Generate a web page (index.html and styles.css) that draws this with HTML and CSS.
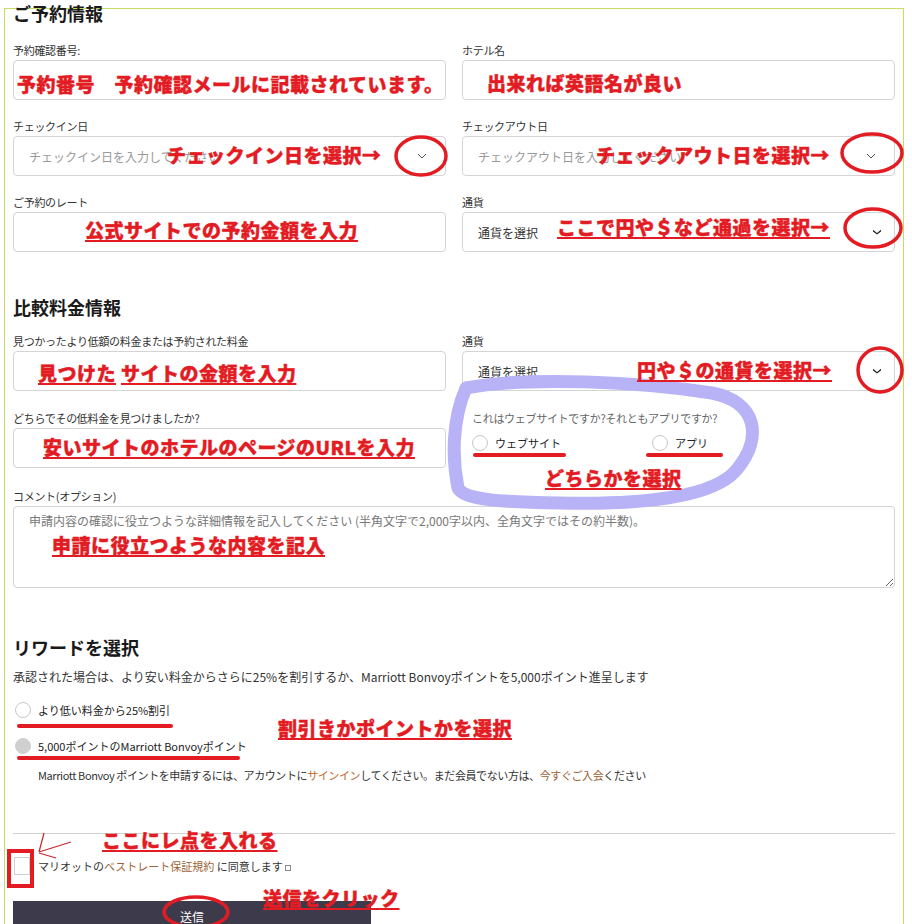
FILE: index.html
```html
<!DOCTYPE html>
<html lang="ja">
<head>
    <meta charset="UTF-8">
    <title>ベストレート保証 申請フォーム</title>
    <link rel="stylesheet" href="styles.css">
</head>
<body>

    <div class="frame">
        <h2 class="section-title first">ご予約情報</h2>
        <div class="grid grid-top">
            <div class="field">
                <label>予約確認番号:</label>
                <div class="box"></div>
            </div>
            <div class="field">
                <label>ホテル名</label>
                <div class="box"></div>
            </div>
            <div class="field">
                <label>チェックイン日</label>
                <div class="box select">
                    <span class="placeholder">チェックイン日を入力してください</span>
                    <svg class="chevron-thin" width="10" height="6" viewBox="0 0 10 6"><polyline points="1,1 5,5 9,1" fill="none" stroke="#555" stroke-width="1"/></svg>
                </div>
            </div>
            <div class="field">
                <label>チェックアウト日</label>
                <div class="box select">
                    <span class="placeholder">チェックアウト日を入力してください</span>
                    <svg class="chevron-thin" width="10" height="6" viewBox="0 0 10 6"><polyline points="1,1 5,5 9,1" fill="none" stroke="#555" stroke-width="1"/></svg>
                </div>
            </div>
            <div class="field">
                <label>ご予約のレート</label>
                <div class="box"></div>
            </div>
            <div class="field">
                <label>通貨</label>
                <div class="box select currency">
                    <span>通貨を選択</span>
                    <svg class="chevron-bold" width="8" height="6" viewBox="0 0 8 6"><path d="M0 0.8 L4 4 L8 0.8 L8 2.4 L4 5.6 L0 2.4 Z" fill="#222"/></svg>
                </div>
            </div>
        </div>

        <h2 class="section-title second">比較料金情報</h2>
        <div class="grid grid-compare">
            <div class="field">
                <label>見つかったより低額の料金または予約された料金</label>
                <div class="box"></div>
            </div>
            <div class="field">
                <label>通貨</label>
                <div class="box select currency">
                    <span>通貨を選択</span>
                    <svg class="chevron-bold" width="8" height="6" viewBox="0 0 8 6"><path d="M0 0.8 L4 4 L8 0.8 L8 2.4 L4 5.6 L0 2.4 Z" fill="#222"/></svg>
                </div>
            </div>
            <div class="field">
                <label>どちらでその低料金を見つけましたか?</label>
                <div class="box"></div>
            </div>
            <div class="source">
                <div class="source-question">これはウェブサイトですか?それともアプリですか?</div>
                <div class="source-options">
                    <div class="option option-wide"><span class="circle"></span>ウェブサイト</div>
                    <div class="option"><span class="circle"></span>アプリ</div>
                </div>
            </div>
        </div>

        <div class="field comment">
            <label>コメント(オプション)</label>
            <textarea placeholder="申請内容の確認に役立つような詳細情報を記入してください (半角文字で2,000字以内、全角文字ではその約半数)。"></textarea>
        </div>

        <h2 class="section-title reward">リワードを選択</h2>
        <p class="reward-text">承認された場合は、より安い料金からさらに25%を割引するか、Marriott Bonvoyポイントを5,000ポイント進呈します</p>
        <div class="option reward-option"><span class="circle"></span>より低い料金から25%割引</div>
        <div class="option reward-option second-option"><span class="circle filled"></span>5,000ポイントのMarriott Bonvoyポイント</div>
        <p class="reward-note">Marriott Bonvoy ポイントを申請するには、アカウントに<a class="link-orange" href="#">サインイン</a>してください。まだ会員でない方は、<a class="link-brown" href="#">今すぐご入会</a>ください</p>

        <div class="divider"></div>

        <div class="agree">
            <span class="checkbox"></span>
            <span>マリオットの<a class="link-brown" href="#">ベストレート保証規約</a> に同意します</span>
            <span class="ext-icon"></span>
        </div>

        <div class="submit">送信</div>
    </div>

    <!-- 赤字の書き込み -->
    <div class="marks">
        <svg class="marks-svg" width="912" height="924" viewBox="0 0 912 924">
            <path class="blob" d="M466 388 C530 376 640 382 712 393 C758 402 762 438 738 468 C716 498 640 505 560 503 C500 502 464 500 458 488 C452 458 452 420 466 388 Z"/>
            <ellipse class="ring" cx="421" cy="156" rx="25" ry="19"/>
            <ellipse class="ring" cx="872" cy="153" rx="30" ry="19"/>
            <ellipse class="ring" cx="873" cy="228" rx="28" ry="19"/>
            <ellipse class="ring" cx="880" cy="370" rx="22" ry="22"/>
            <ellipse class="ring" cx="196" cy="912" rx="32" ry="15"/>
            <line class="stroke" x1="475" y1="455" x2="564" y2="455"/>
            <line class="stroke" x1="648" y1="455" x2="721" y2="455"/>
            <line class="stroke" x1="19" y1="726" x2="171" y2="726"/>
            <line class="stroke" x1="19" y1="758" x2="238" y2="758"/>
            <rect class="box-mark" x="9" y="851" width="23" height="35"/>
            <line class="thin" x1="39" y1="852" x2="44" y2="833"/>
            <line class="thin" x1="39" y1="852" x2="71" y2="842"/>
            <line class="thin" x1="39" y1="853" x2="56" y2="858"/>
        </svg>
        <span class="note n-number">予約番号　予約確認メールに記載されています。</span>
        <span class="note n-hotel">出来れば英語名が良い</span>
        <span class="note n-checkin">チェックイン日を選択→</span>
        <span class="note n-checkout">チェックアウト日を選択→</span>
        <span class="note u n-currency">ここで円や＄など通過を選択→</span>
        <span class="note u n-rate">公式サイトでの予約金額を入力</span>
        <span class="note n-found"><span class="u">見つけた</span> <span class="u">サイトの金額を入力</span></span>
        <span class="note u n-url">安いサイトのホテルのページのURLを入力</span>
        <span class="note u n-currency2">円や＄の通貨を選択→</span>
        <span class="note u n-which">どちらかを選択</span>
        <span class="note u n-comment">申請に役立つような内容を記入</span>
        <span class="note u n-reward">割引きかポイントかを選択</span>
        <span class="note u n-check">ここにレ点を入れる</span>
        <span class="note u n-send">送信をクリック</span>
    </div>

</body>
</html>
```

FILE: styles.css
```css
* {
    box-sizing: border-box;
}

html, body {
    margin: 0;
    height: 924px;
    overflow: hidden;
}

body {
    position: relative;
    font-family: "Noto Sans CJK JP", "Noto Sans", sans-serif;
    color: #222;
    background: #fff;
}

/* Rahmen um das Formular */
.frame {
    margin: 8px 0 0 4px;
    width: 900px;
    height: 916px;
    border: 1px solid #c5dd62;
    border-bottom: none;
    padding: 0 8px;
}

.section-title {
    margin: 0;
    font-size: 18px;
    line-height: 22px;
    font-weight: 700;
    color: #1a1a1a;
}

.section-title.first {
    margin-top: -7px;
}

.section-title.second {
    margin-top: 44px;
}

.section-title.reward {
    margin-top: 48px;
}

.grid {
    display: grid;
    grid-template-columns: 1fr 1fr;
    column-gap: 16px;
    row-gap: 19px;
}

.grid-top {
    margin-top: 19px;
}

.grid-compare {
    margin-top: 16px;
    row-gap: 20px;
}

.field label {
    display: block;
    font-size: 11px;
    line-height: 14px;
    color: #333;
    margin-bottom: 3px;
    letter-spacing: -0.3px;
}

.box {
    height: 40px;
    border: 1px solid #d4d4d4;
    border-radius: 4px;
    background: #fff;
    display: flex;
    align-items: center;
    justify-content: space-between;
    padding: 0 18px 0 15px;
    font-size: 12px;
    color: #333;
}

.box.currency {
    padding-right: 13px;
}

.placeholder {
    color: #999;
}

/* Radio-Auswahl Webseite / App */
.source {
    padding-left: 10px;
}

.source-question {
    font-size: 11px;
    line-height: 14px;
    color: #666;
    letter-spacing: -0.3px;
}

.source-options {
    display: flex;
    margin-top: 10px;
}

.option {
    display: flex;
    align-items: center;
    font-size: 11px;
    line-height: 16px;
    color: #222;
}

.option-wide {
    width: 180px;
}

.circle {
    width: 16px;
    height: 16px;
    border: 1px solid #c8c8c8;
    border-radius: 50%;
    background: #fff;
    margin-right: 7px;
    flex-shrink: 0;
}

.circle.filled {
    background: #d0d0d0;
    border-color: #d0d0d0;
}

.comment {
    margin-top: 21px;
}

textarea {
    display: block;
    width: 100%;
    height: 82px;
    border: 1px solid #d4d4d4;
    border-radius: 4px;
    padding: 6px 15px;
    font-family: inherit;
    font-size: 12px;
    line-height: 16px;
    resize: vertical;
}

textarea::placeholder {
    color: #777;
}

.reward-text {
    margin: 11px 0 0;
    font-size: 12px;
    line-height: 16px;
    color: #333;
}

.reward-option {
    margin-top: 15px;
    height: 20px;
    padding-left: 2px;
}

.reward-option.second-option {
    margin-top: 16px;
}

.reward-note {
    margin: 11px 0 0;
    padding-left: 25px;
    font-size: 11px;
    line-height: 16px;
    color: #333;
    letter-spacing: -0.4px;
}

.link-orange {
    color: #c0682a;
    text-decoration: none;
}

.link-brown {
    color: #9b5f36;
    text-decoration: none;
}

.divider {
    margin-top: 50px;
    height: 1px;
    background: #d2d2d2;
}

.agree {
    margin-top: 23px;
    height: 18px;
    display: flex;
    align-items: center;
    font-size: 11px;
    color: #333;
}

.checkbox {
    width: 16px;
    height: 18px;
    border: 1px solid #cfcfcf;
    background: #fff;
    margin: 0 8px 0 1px;
}

.ext-icon {
    width: 6px;
    height: 6px;
    border: 1px solid #888;
    margin-left: 2px;
    margin-top: 3px;
}

.submit {
    margin-top: 26px;
    width: 358px;
    height: 44px;
    background: #3d3a4b;
    color: #fff;
    font-size: 12px;
    line-height: 16px;
    padding-top: 8px;
    text-align: center;
}

/* Markierungen über dem Screenshot */
.marks {
    position: absolute;
    left: 0;
    top: 0;
    width: 912px;
    height: 924px;
    pointer-events: none;
}

.marks-svg {
    position: absolute;
    left: 0;
    top: 0;
}

.blob {
    fill: none;
    stroke: #b8b3f6;
    stroke-width: 13;
    stroke-linejoin: round;
}

.ring {
    fill: none;
    stroke: #e31b23;
    stroke-width: 3.5;
}

.stroke {
    stroke: #e31b23;
    stroke-width: 4;
    stroke-linecap: round;
}

.box-mark {
    fill: none;
    stroke: #e31b23;
    stroke-width: 4;
}

.thin {
    stroke: #c8262d;
    stroke-width: 1.2;
}

.note {
    position: absolute;
    font-size: 19px;
    line-height: 22px;
    font-weight: 900;
    color: #e31b23;
    letter-spacing: 0.5px;
    white-space: nowrap;
    -webkit-text-stroke: 0.4px #e31b23;
}

.u {
    text-decoration: underline;
    text-decoration-thickness: 2px;
    text-underline-offset: 2px;
}

.n-number { left: 17px; top: 73px; }
.n-hotel { left: 487px; top: 72px; }
.n-checkin { left: 167px; top: 144px; }
.n-checkout { left: 596px; top: 144px; }
.n-currency { left: 557px; top: 216px; }
.n-rate { left: 85px; top: 219px; }
.n-found { left: 38px; top: 362px; }
.n-url { left: 43px; top: 436px; }
.n-currency2 { left: 637px; top: 359px; }
.n-which { left: 545px; top: 467px; }
.n-comment { left: 52px; top: 534px; }
.n-reward { left: 278px; top: 717px; }
.n-check { left: 102px; top: 829px; }
.n-send { left: 263px; top: 887px; }
```
